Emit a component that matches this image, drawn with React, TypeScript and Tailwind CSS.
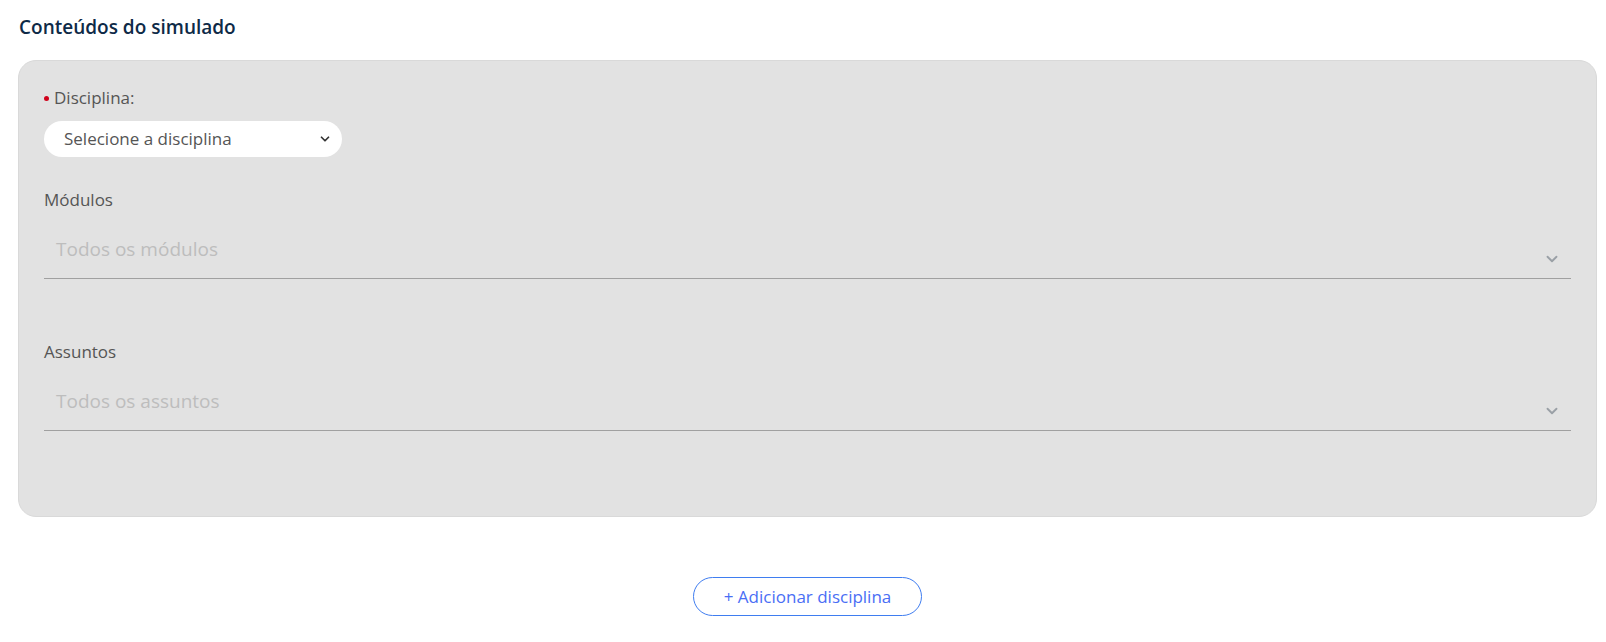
import { ChevronDown } from "lucide-react";

const FieldSelect = ({ label, placeholder }: { label: string; placeholder: string }) => {
	return (
		<div className="flex flex-col">
			<p className="text-[17px] leading-[24px] text-[#555]">{label}</p>
			<div className="mt-[23px] flex items-start justify-between border-b border-[#a0a0a0] h-[44px] pl-[12px] pr-[10px]">
				<span className="text-[19px] leading-[28px] text-[#bdbdbd]">{placeholder}</span>
				<ChevronDown size={18} strokeWidth={2.5} className="mt-[15px] text-[#9aa0a6]" />
			</div>
		</div>
	);
};

export default function App() {
	return (
		<div className="min-h-screen bg-white px-[18px] pt-[14px] font-['Open_Sans','Noto_Sans',sans-serif]">
			<h2 className="text-[19px] leading-[26px] font-semibold text-[#0e2a47] pl-px">Conteúdos do simulado</h2>

			<div className="mt-[20px] w-[1579px] h-[457px] rounded-[18px] bg-[#e2e2e2] border border-[#d9d9d9] pl-[25px] pr-[25px] pt-[25px]">
				<p className="flex items-center gap-[5px] text-[17px] leading-[24px] text-[#555]">
					<span className="block w-[5px] h-[5px] rounded-full bg-[#d0021b]" />
					Disciplina:
				</p>
				<div className="mt-[11px] flex items-center justify-between w-[298px] h-[36px] rounded-full bg-white pl-[20px] pr-[10px]">
					<span className="text-[17px] text-[#555]">Selecione a disciplina</span>
					<ChevronDown size={14} strokeWidth={3} className="text-[#333]" />
				</div>

				<div className="mt-[31px]">
					<FieldSelect label="Módulos" placeholder="Todos os módulos" />
				</div>
				<div className="mt-[61px]">
					<FieldSelect label="Assuntos" placeholder="Todos os assuntos" />
				</div>
			</div>

			<div className="mt-[60px] flex justify-center w-[1579px]">
				<button className="w-[229px] h-[39px] rounded-full border border-[#3f7df0] bg-white text-[17px] text-[#4a6ef5]">
					+ Adicionar disciplina
				</button>
			</div>
		</div>
	);
}
